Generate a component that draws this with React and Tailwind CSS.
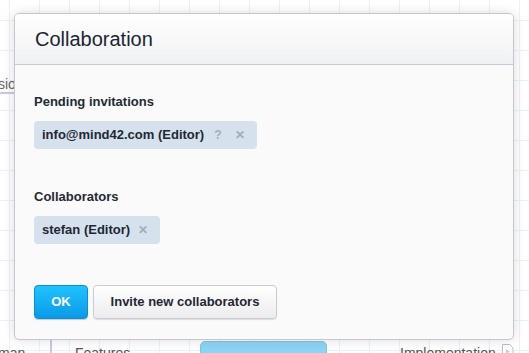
import React from 'react';

const font = { fontFamily: '"Liberation Sans", Arial, sans-serif' };

const Tag = ({ label, pending }) => (
  <div className="inline-flex items-center h-[28px] rounded-[4px] bg-[#d5e1ed] pl-[8px] pr-[12px] text-[13px] font-bold text-[#1f2733]">
    <span>{label}</span>
    {pending && <span className="ml-[10px] text-[12px] text-[#a3adb8]">?</span>}
    <span className={`${pending ? 'ml-[13px]' : 'ml-[8px]'} text-[12px] leading-none text-[#a3adb8]`}>✕</span>
  </div>
);

const Canvas = () => (
  <>
    {/* items of the mind map behind the dialog */}
    <span className="absolute left-[-2px] top-[74px] text-[14px] text-[#666]">sio</span>
    <div className="absolute left-0 top-[92px] h-[2px] w-[20px] bg-[#cdc6e8]" />
    <span className="absolute left-[-2px] top-[343px] text-[14px] text-[#555]">man</span>
    <div className="absolute left-[50px] top-[338px] h-[20px] w-[2px] bg-[#cdc6e8]" />
    <span className="absolute left-[75px] top-[343px] text-[14px] text-[#555]">Features</span>
    <div className="absolute left-[200px] top-[341px] h-[20px] w-[127px] rounded-t-[5px] border border-[#7ec3e8] bg-[#8dd3f4]" />
    <span className="absolute left-[400px] top-[343px] text-[14px] text-[#555]">Implementation</span>
    <svg className="absolute left-[501px] top-[344px]" width="13" height="14" viewBox="0 0 13 14">
      <path d="M1.5 0.5h7l3.5 3.5v9.5h-10.5z" fill="#fff" stroke="#b8bec8" />
      <path d="M5 5l4 2.5-4 2.5z" fill="#c9ced6" />
    </svg>
  </>
);

export default function App() {
  return (
    <div
      className="relative h-[353px] w-[529px] overflow-hidden bg-white bg-[linear-gradient(to_right,#e9f2f9_1px,transparent_1px),linear-gradient(to_bottom,#e9f2f9_1px,transparent_1px)] bg-[size:30px_30px] bg-[position:9px_20px] pt-[13px] pl-[14px]"
      style={font}
    >
      <Canvas />
      <div className="relative w-[500px] h-[327px] rounded-[5px] border border-[#c3c7cf] bg-[#fafafa] shadow-[0_0_12px_rgba(0,0,0,0.14)] overflow-hidden flex flex-col">
        <div className="h-[51px] shrink-0 flex items-center px-[20px] border-b border-[#c6cad3] bg-[linear-gradient(to_bottom,#ffffff,#f0f1f3)]">
          <h1 className="text-[20px] text-[#1c2532]">Collaboration</h1>
        </div>
        <div className="flex flex-col items-start pl-[19px] pt-[29px]">
          <h2 className="text-[13px] leading-[16px] font-bold text-[#222a35]">Pending invitations</h2>
          <div className="mt-[11px]">
            <Tag label="info@mind42.com (Editor)" pending />
          </div>
          <h2 className="mt-[40px] text-[13px] leading-[16px] font-bold text-[#222a35]">Collaborators</h2>
          <div className="mt-[11px]">
            <Tag label="stefan (Editor)" />
          </div>
          <div className="mt-[41px] flex gap-[5px]">
            <button className="h-[34px] w-[54px] rounded-[4px] border border-[#0a8fd6] bg-[linear-gradient(to_bottom,#1fc3ff,#0a9ae6)] text-[13px] font-bold text-white shadow-[0_1px_1px_rgba(0,0,0,0.2)]">
              OK
            </button>
            <button className="h-[34px] w-[184px] rounded-[4px] border border-[#c9ccd1] bg-[linear-gradient(to_bottom,#ffffff,#ececee)] text-[13px] font-bold text-[#1f2733] shadow-[0_1px_1px_rgba(0,0,0,0.12)]">
              Invite new collaborators
            </button>
          </div>
        </div>
      </div>
    </div>
  );
}
